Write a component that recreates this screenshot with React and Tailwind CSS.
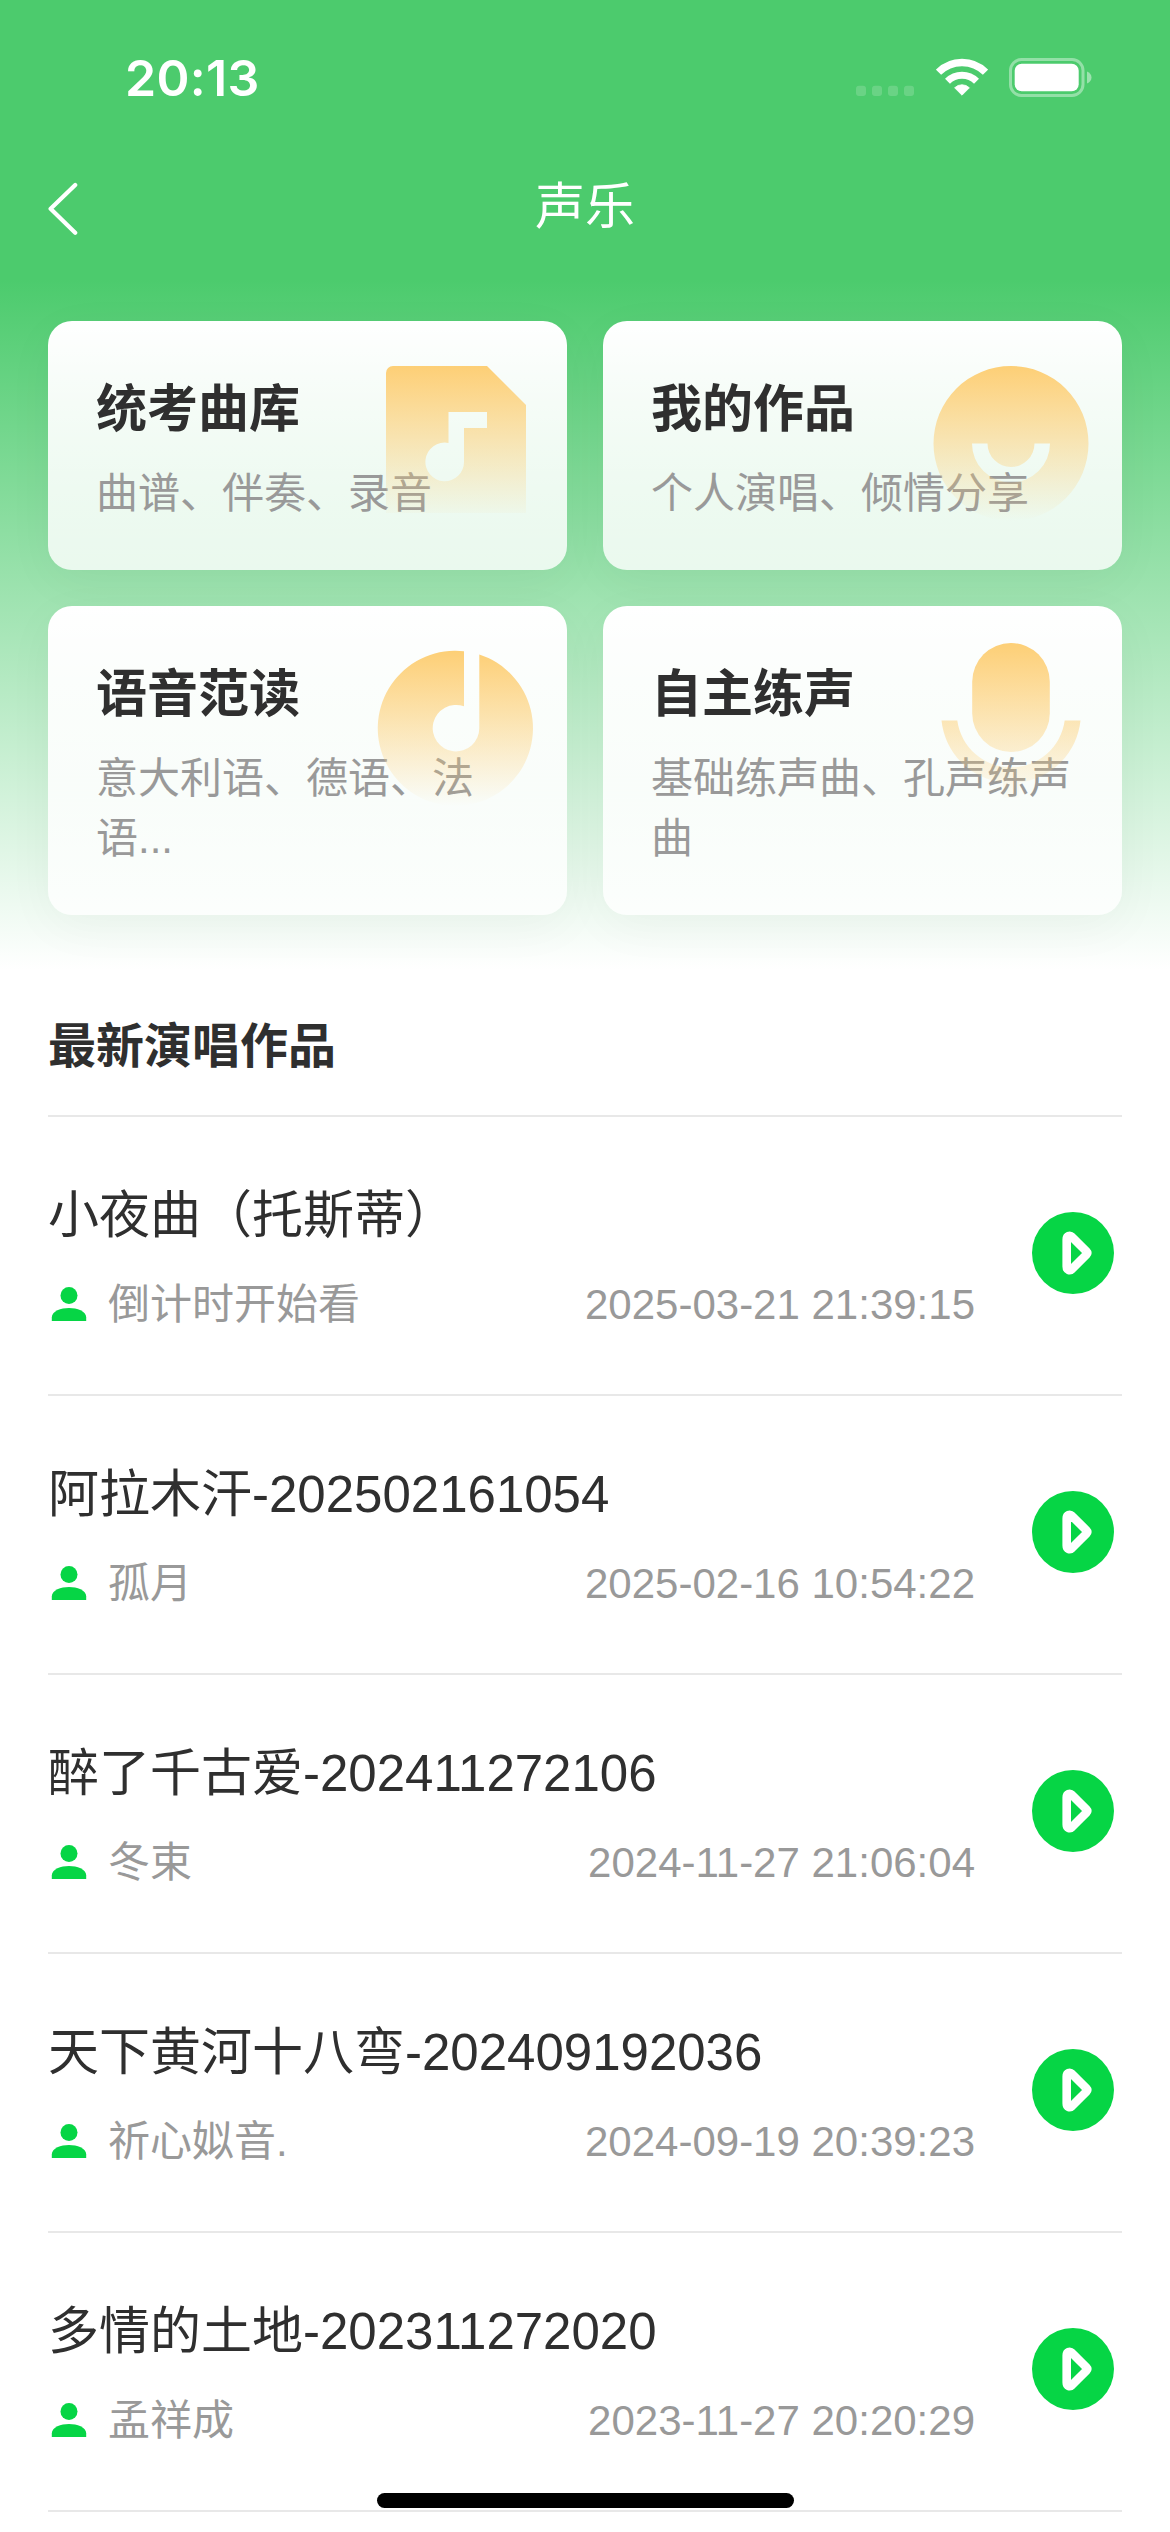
const FONT =
  "font-['Liberation_Sans','Noto_Sans_CJK_SC',sans-serif]";

function StatusBar() {
  return (
    <div className="flex h-[156px] items-start pl-[125px] pr-[78px] pt-[47px] text-white">
      <span className="font-['Inter',sans-serif] text-[50px] font-semibold leading-[62px] tracking-[0.3px]">20:13</span>
      <div className="ml-auto mt-[9px] flex items-center">
        <svg width="60" height="42" viewBox="0 0 60 42" className="mr-[20px]">
          {[0, 16, 32, 48].map((x) => (
            <rect key={x} x={x} y="29.700" width="10" height="10.300" rx="3" fill="#fff" opacity=".17" />
          ))}
        </svg>
        <svg width="52" height="42" viewBox="0 0 52 42" className="mr-[21px]" fill="none" stroke="#fff">
          <path d="M2.500 16.200A33.200 33.200 0 0 1 49.500 16.200" strokeWidth="7.400" />
          <path d="M11.500 25.200A20.500 20.500 0 0 1 40.500 25.200" strokeWidth="7" />
          <path d="M26 39.200L18.600 31.800A10.500 10.500 0 0 1 33.400 31.800z" fill="#fff" strokeWidth="0.800" strokeLinejoin="round" />
        </svg>
        <svg width="83" height="42" viewBox="0 0 83 42">
          <rect x="1.500" y="3.500" width="72.500" height="36" rx="11" fill="none" stroke="#fff" strokeWidth="3" opacity=".4" />
          <rect x="5.700" y="7.800" width="64" height="27.400" rx="7" fill="#fff" />
          <path d="M78 15.500c2.800 1.100 4.500 3.400 4.500 6s-1.700 4.900-4.500 6z" fill="#fff" opacity=".45" />
        </svg>
      </div>
    </div>
  );
}

function NavBar() {
  return (
    <div className="grid h-[165px] grid-cols-3 items-start px-12 pt-[16px]">
      <svg width="32" height="54" viewBox="0 0 32 54" className="mt-[10px]">
        <path d="M27.200 3 2.600 26.800l24.600 24" fill="none" stroke="#fff" strokeWidth="4.200" strokeLinecap="round" strokeLinejoin="round" />
      </svg>
      <h1 className="text-center text-[50px] leading-[70px] text-white">声乐</h1>
    </div>
  );
}

function Fade({ id, y1, y2 }) {
  return (
    <defs>
      <linearGradient id={id} gradientUnits="userSpaceOnUse" x1="0" y1={y1} x2="0" y2={y2}>
        <stop offset="0" stopColor="#fdcf76" />
        <stop offset="1" stopColor="#fdcf76" stopOpacity="0" />
      </linearGradient>
    </defs>
  );
}

/* Card drawings share one 200 x 220 canvas, anchored to the card's top right corner. */
function ScoreArt() {
  return (
    <svg width="200" height="220" viewBox="0 0 200 220">
      <Fade id="fadeScore" y1="45" y2="200" />
      <path
        fill="url(#fadeScore)"
        fillRule="evenodd"
        d="M26 45H120L159 84V192H19V52a7 7 0 0 1 7-7zM81.500 91V122a19.300 19.300 0 1 0 15.500 18.500V107H120V91z"
      />
    </svg>
  );
}

function SmileArt() {
  return (
    <svg width="200" height="220" viewBox="0 0 200 220">
      <Fade id="fadeSmile" y1="45" y2="200" />
      <path
        fill="url(#fadeSmile)"
        fillRule="evenodd"
        d="M89 45a77.500 77.500 0 1 1 0 155a77.500 77.500 0 1 1 0-155zM50 122.500a39 39 0 0 0 78 0H112.500a23.500 23.500 0 0 1-47 0z"
      />
    </svg>
  );
}

function DiscArt() {
  return (
    <svg width="200" height="220" viewBox="0 0 200 220">
      <Fade id="fadeDisc" y1="45" y2="200" />
      <path
        fill="url(#fadeDisc)"
        d="M97 45.200V100.300A23.300 23.300 0 1 0 112.300 122V48.500A77.600 77.600 0 1 1 97 45.200z"
      />
    </svg>
  );
}

function MicArt() {
  return (
    <svg width="200" height="220" viewBox="0 0 200 220">
      <Fade id="fadeMic" y1="37" y2="198" />
      <rect x="50.200" y="37" width="77.600" height="109" rx="38.800" fill="url(#fadeMic)" />
      <path
        fill="url(#fadeMic)"
        d="M19.500 114.500H35.300A54.200 54.200 0 0 0 142.700 114.500H158.500A69.800 69.800 0 0 1 96.800 176.600V192H81.200V176.600A69.800 69.800 0 0 1 19.500 114.500z"
      />
    </svg>
  );
}

const cards = [
  { title: "统考曲库", lines: ["曲谱、伴奏、录音"], Art: ScoreArt },
  { title: "我的作品", lines: ["个人演唱、倾情分享"], Art: SmileArt },
  { title: "语音范读", lines: ["意大利语、德语、法", "语..."], Art: DiscArt },
  { title: "自主练声", lines: ["基础练声曲、孔声练声", "曲"], Art: MicArt },
];

function Card({ title, lines, Art }) {
  return (
    <section className="relative rounded-[24px] bg-linear-to-b from-white to-white/80 pb-[46px] pl-12 pt-[50px] shadow-[0_12px_50px_rgba(0,0,0,0.04)]">
      <h2 className="text-[51px] font-bold leading-[78px] text-[#2f2f2f]">{title}</h2>
      <p className="mt-[15px] whitespace-nowrap text-[42px] leading-[60px] text-[#999]">
        {lines.map((line) => (
          <span key={line} className="block">{line}</span>
        ))}
      </p>
      <div className="absolute right-0 top-0">
        <Art />
      </div>
    </section>
  );
}

const songs = [
  { title: "小夜曲（托斯蒂）", user: "倒计时开始看", time: "2025-03-21 21:39:15" },
  { title: "阿拉木汗-202502161054", user: "孤月", time: "2025-02-16 10:54:22" },
  { title: "醉了千古爱-202411272106", user: "冬束", time: "2024-11-27 21:06:04" },
  { title: "天下黄河十八弯-202409192036", user: "祈心姒音.", time: "2024-09-19 20:39:23" },
  { title: "多情的土地-202311272020", user: "孟祥成", time: "2023-11-27 20:20:29" },
];

function SongRow({ title, user, time }) {
  return (
    <li className="flex h-[279px] items-center border-b-2 border-[#e8e8e8] pr-2">
      <div className="w-[927px] pt-[4px]">
        <div className="text-[51px] leading-[72px] text-[#2f2f2f]">{title}</div>
        <div className="mt-[23px] flex items-center text-[42px] leading-[60px] text-[#999]">
          <svg width="42" height="42" viewBox="0 0 42 42" fill="#06d545" className="-mt-[3px] mr-[18px]">
            <circle cx="21" cy="12.500" r="8.500" />
            <path d="M3.800 38V34.500C3.800 28 13 25 21 25s17.200 3 17.200 9.500V38z" />
          </svg>
          <span>{user}</span>
          <span className="ml-auto">{time}</span>
        </div>
      </div>
      <svg width="82" height="82" viewBox="0 0 82 82" className="-mt-[5px] ml-auto">
        <circle cx="41" cy="41" r="41" fill="#06d545" />
        <path d="M34.700 27.500v27c0 3.800 3.200 4.800 5.300 2.500L54.300 42.800Q56 41 54.300 39.200L40 25c-2.100-2.300-5.300-1.300-5.300 2.500z" fill="none" stroke="#fff" strokeWidth="8.600" strokeLinejoin="round" />
      </svg>
    </li>
  );
}

export default function App() {
  return (
    <div className={`${FONT} relative h-[2532px] w-[1170px] overflow-hidden bg-white bg-[linear-gradient(to_bottom,#4ccb6d_0px,#4ccb6d_280px,#ffffff_970px)]`}>
      <StatusBar />
      <NavBar />
      <main className="px-12">
        <div className="grid grid-cols-2 gap-9">
          {cards.map((c) => (
            <Card key={c.title} {...c} />
          ))}
        </div>
        <h2 className="mt-[96px] h-[106px] border-b-2 border-[#e8e8e8] text-[48px] font-bold leading-[72px] text-[#2f2f2f]">最新演唱作品</h2>
        <ul>
          {songs.map((s) => (
            <SongRow key={s.title} {...s} />
          ))}
        </ul>
      </main>
      <div className="absolute bottom-[24px] left-[377px] h-[15px] w-[417px] rounded-full bg-black" />
    </div>
  );
}
